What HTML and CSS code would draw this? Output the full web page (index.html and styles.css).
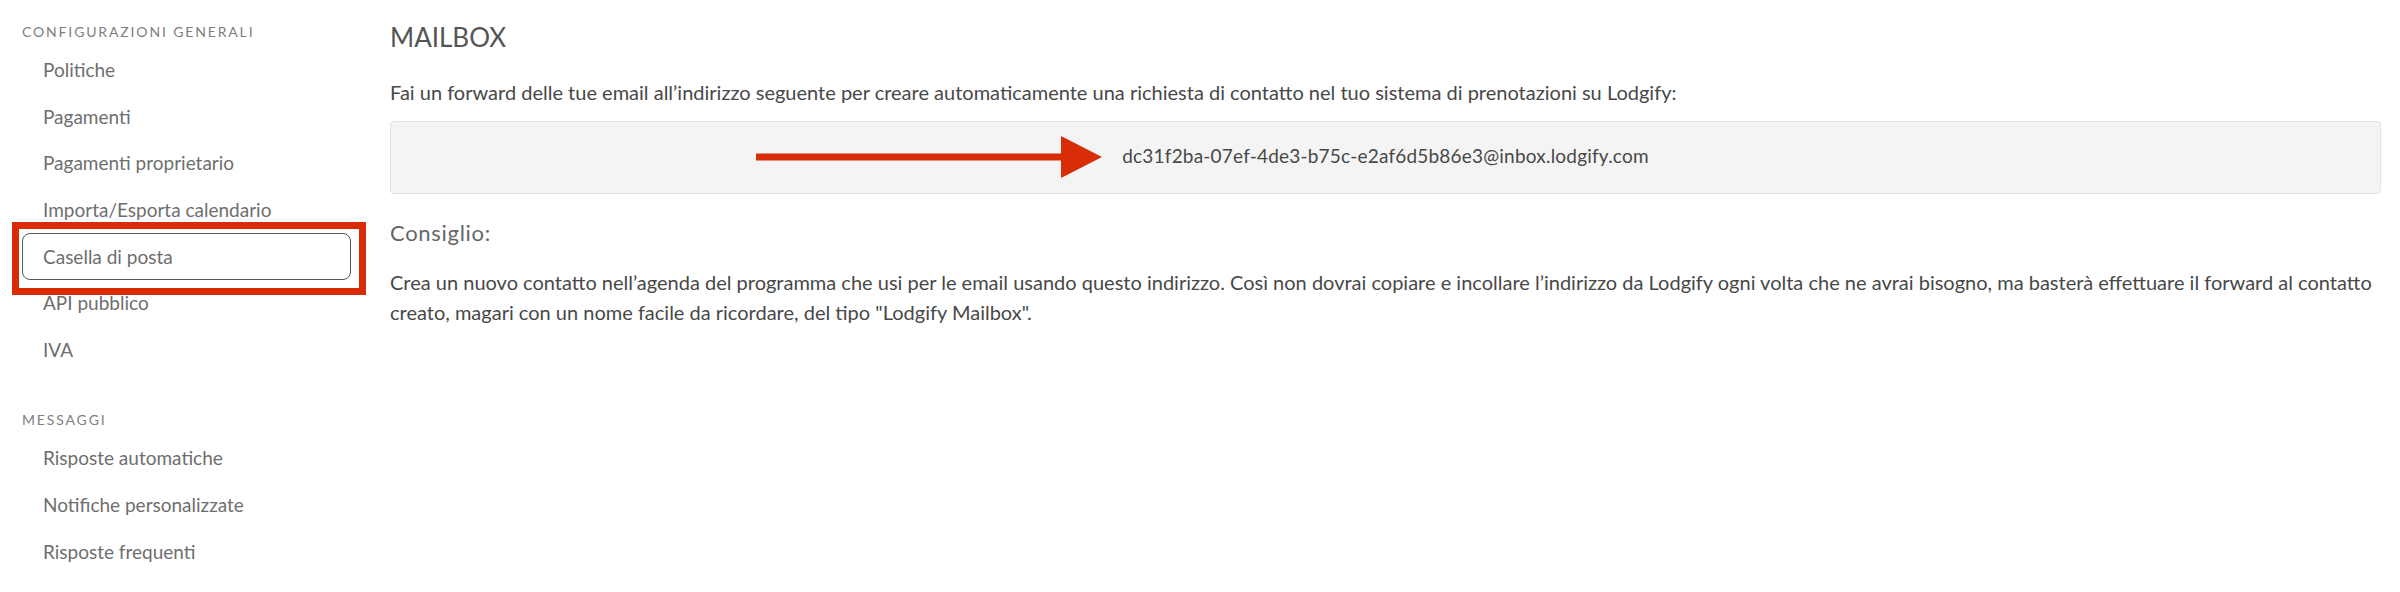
FILE: index.html
```html
<!DOCTYPE html>
<html lang="it">
<head>
<meta charset="utf-8">
<title>Mailbox</title>
<link rel="stylesheet" href="styles.css">
</head>
<body>
<div class="layout">
  <nav class="sidebar">
    <div class="nav-group">
      <div class="nav-heading">Configurazioni generali</div>
      <a class="nav-item">Politiche</a>
      <a class="nav-item">Pagamenti</a>
      <a class="nav-item">Pagamenti proprietario</a>
      <a class="nav-item">Importa/Esporta calendario</a>
      <a class="nav-item is-active">Casella di posta<span class="highlight-frame"></span></a>
      <a class="nav-item">API pubblico</a>
      <a class="nav-item">IVA</a>
    </div>
    <div class="nav-group nav-group--spaced">
      <div class="nav-heading">Messaggi</div>
      <a class="nav-item">Risposte automatiche</a>
      <a class="nav-item">Notifiche personalizzate</a>
      <a class="nav-item">Risposte frequenti</a>
    </div>
  </nav>
  <main class="content">
    <h1 class="page-title">MAILBOX</h1>
    <p class="intro">Fai un forward delle tue email all’indirizzo seguente per creare automaticamente una richiesta di contatto nel tuo sistema di prenotazioni su Lodgify:</p>
    <div class="address-box">
      <span class="address">
        <svg class="pointer-arrow" width="346" height="42" viewBox="0 0 346 42" aria-hidden="true">
          <rect x="0" y="17.5" width="308" height="7" fill="#d92d08"/>
          <polygon points="305,0 346,21 305,42" fill="#d92d08"/>
        </svg>dc31f2ba-07ef-4de3-b75c-e2af6d5b86e3@inbox.lodgify.com</span>
    </div>
    <h2 class="tip-title">Consiglio:</h2>
    <p class="tip-text">Crea un nuovo contatto nell’agenda del programma che usi per le email usando questo indirizzo. Così non dovrai copiare e incollare l’indirizzo da Lodgify ogni volta che ne avrai bisogno, ma basterà effettuare il forward al contatto creato, magari con un nome facile da ricordare, del tipo "Lodgify Mailbox".</p>
  </main>
</div>
</body>
</html>
```

FILE: styles.css
```css
html, body {
  margin: 0;
  padding: 0;
  background: #ffffff;
}

body {
  font-family: "Lato", "Liberation Sans", sans-serif;
  color: #4a4a4a;
  width: 2400px;
  height: 592px;
  overflow: hidden;
}

.layout {
  display: flex;
  align-items: flex-start;
}

/* Sidebar */
.sidebar {
  flex: 0 0 329px;
  padding: 23px 0 0 22px;
  display: flex;
  flex-direction: column;
}

.nav-group {
  display: flex;
  flex-direction: column;
}

.nav-group--spaced {
  margin-top: 38px;
}

.nav-heading {
  font-size: 14px;
  line-height: 17px;
  letter-spacing: 1.85px;
  text-transform: uppercase;
  color: #808080;
  margin: 0 0 7px 0;
}

.nav-item {
  position: relative;
  display: block;
  font-size: 19px;
  line-height: 24px;
  padding: 10.3px 20px;
  border: 1.5px solid transparent;
  border-radius: 8px;
  color: #6e6e6e;
  cursor: pointer;
}

.nav-item.is-active {
  border-color: #555555;
}

.highlight-frame {
  position: absolute;
  left: -11.5px;
  top: -12.5px;
  right: -15.5px;
  bottom: -16.5px;
  border: 7.5px solid #d82c07;
  pointer-events: none;
}

/* Content */
.content {
  flex: 1 1 auto;
  margin-left: 39px;
  margin-right: 19px;
  padding-top: 21px;
}

.page-title {
  margin: 0;
  font-size: 26px;
  line-height: 32px;
  font-weight: 400;
  color: #555555;
}

.intro {
  margin: 26px 0 0 0;
  font-size: 20px;
  line-height: 27px;
  color: #484848;
}

.address-box {
  margin-top: 15px;
  height: 73px;
  box-sizing: border-box;
  padding-bottom: 3px;
  background: #f4f4f4;
  border: 1px solid #e2e2e2;
  border-radius: 4px;
  display: flex;
  align-items: center;
  justify-content: center;
}

.address {
  position: relative;
  font-size: 19px;
  line-height: 22px;
  letter-spacing: 0.2px;
  color: #484848;
}

.pointer-arrow {
  position: absolute;
  right: calc(100% + 20px);
  top: 50%;
  margin-top: -20px;
}

.tip-title {
  margin: 25.5px 0 0 0;
  font-size: 22px;
  line-height: 26px;
  font-weight: 400;
  letter-spacing: 0.7px;
  color: #666666;
}

.tip-text {
  margin: 21px 0 0 0;
  font-size: 20px;
  line-height: 30px;
  color: #484848;
}
```
